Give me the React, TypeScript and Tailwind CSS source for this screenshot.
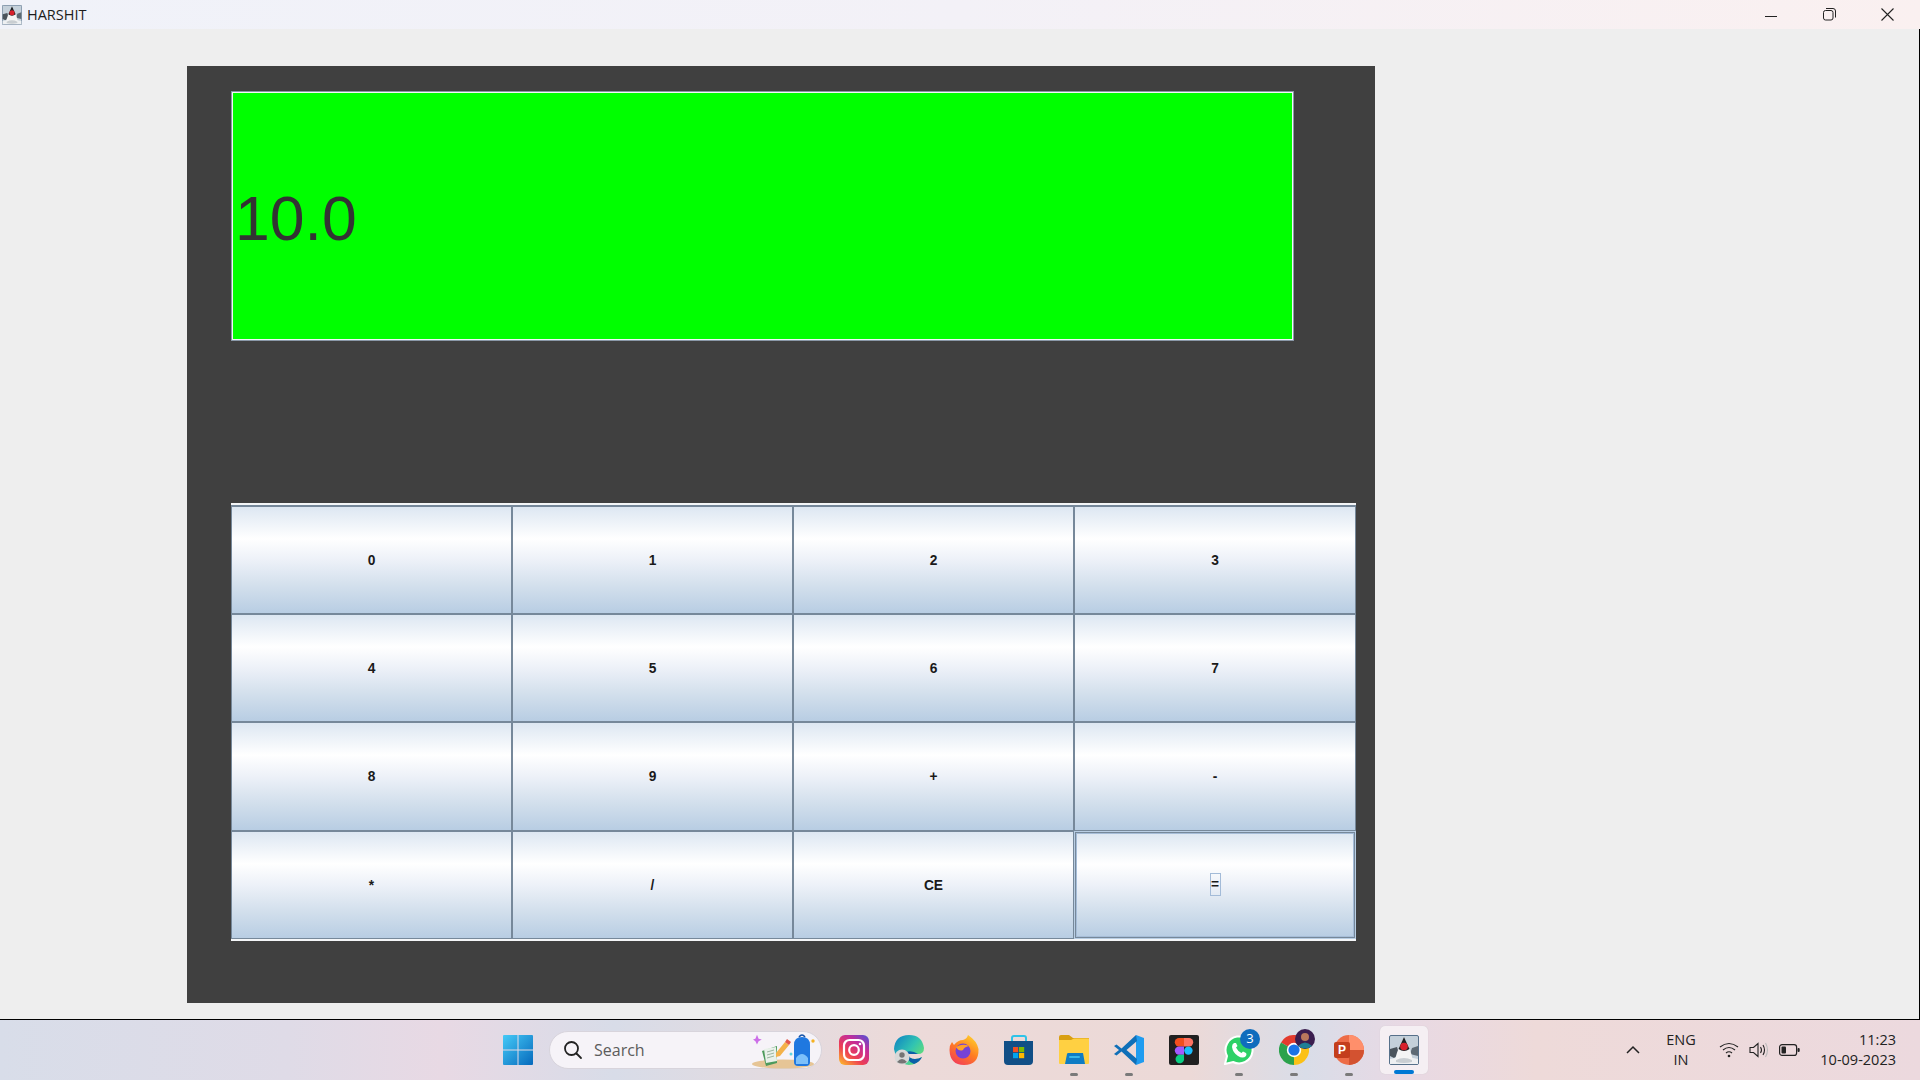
const keys = ["0", "1", "2", "3", "4", "5", "6", "7", "8", "9", "+", "-", "*", "/", "CE", "="];

const keyGradient =
  "bg-[linear-gradient(180deg,#dde7f2_0%,#ffffff_30%,#edf1f8_50%,#d2dfec_75%,#b8cde3_100%)]";

const DukeIcon = ({ size }: { size: number }) => (
  <svg width={size} height={size} viewBox="0 0 30 30">
    <rect x="0.5" y="0.5" width="29" height="29" rx="1.5" fill="#c4d0da" stroke="#56708a" />
    <path d="M1 14 L8 12 L10 19 L5 23 L1 21Z" fill="#4b545c" />
    <path d="M29 11 L23 13 L21 19 L29 21Z" fill="#5e6a74" />
    <path d="M1 24 Q15 20 29 24 V29 H1Z" fill="#eef0f2" />
    <path d="M15 2 L21 15 Q24 23 23 26 Q15 29 7 26 Q6 22 9 15Z" fill="#f4f4f4" />
    <path d="M15 2 L20.5 14 Q15 18 9.5 14Z" fill="#1d2024" />
    <circle cx="15" cy="11.5" r="3.8" fill="#d8202c" />
    <path d="M7 25 Q15 21 23 25 L23 27 Q15 29 7 27Z" fill="#c9ced2" />
  </svg>
);

const StartIcon = () => (
  <svg width="30" height="30" viewBox="0 0 30 30">
    <defs>
      <linearGradient id="win" x1="0" y1="0" x2="1" y2="1">
        <stop offset="0" stopColor="#45caf7" />
        <stop offset="1" stopColor="#0669bc" />
      </linearGradient>
    </defs>
    <path d="M1 0H14.5V14.5H0V1Q0 0 1 0Z M15.5 0H29Q30 0 30 1V14.5H15.5Z M0 15.5H14.5V30H1Q0 30 0 29Z M15.5 15.5H30V29Q30 30 29 30H15.5Z" fill="url(#win)" />
  </svg>
);

const SearchArt = () => (
  <svg width="66" height="36" viewBox="0 0 66 36">
    <ellipse cx="34" cy="31" rx="31" ry="4.5" fill="#e6c596" />
    <path d="M8 11 L10 6 L12 11 L16 12 L12 14 L10 18 L8 14 L5 12Z" fill="#cc6ee8" transform="translate(0 -3) scale(0.8)" />
    <path d="M13 18 L28 13 L28 30 L17 33Z" fill="#4d9a5c" />
    <path d="M15 16 L27 14 L28 28 L17 30Z" fill="#e9f1ea" />
    <path d="M18 19 L25 17 M18 22 L25 20 M18 25 L25 23" stroke="#9ab6a0" strokeWidth="1" />
    <path d="M27 20 L36 9 L40 12 L31 23 L27 24Z" fill="#f4b24a" />
    <path d="M36 9 L38 6 L42 9 L40 12Z" fill="#e2574c" />
    <circle cx="42" cy="21" r="1.5" fill="#5fd4e0" />
    <path d="M45 12 Q45 4 53 4 Q61 4 61 12 V29 Q61 33 57 33 H49 Q45 33 45 29Z" fill="#1f78e0" />
    <path d="M47 25 Q53 17 59 25 V31 H47Z" fill="#7cc0fa" />
    <path d="M50 4 Q53 0 56 4" fill="none" stroke="#1553a8" strokeWidth="1.5" />
    <circle cx="64" cy="8" r="1.7" fill="#f5b120" />
  </svg>
);

const InstagramIcon = () => (
  <svg width="30" height="30" viewBox="0 0 30 30">
    <defs>
      <linearGradient id="ig" x1="0.1" y1="1" x2="0.9" y2="0">
        <stop offset="0" stopColor="#fdb52c" />
        <stop offset="0.35" stopColor="#ee3f53" />
        <stop offset="0.7" stopColor="#c32c9a" />
        <stop offset="1" stopColor="#5b4fd0" />
      </linearGradient>
    </defs>
    <rect width="30" height="30" rx="6" fill="url(#ig)" />
    <rect x="5" y="5" width="20" height="20" rx="5.5" fill="none" stroke="#fff" strokeWidth="2.2" />
    <circle cx="15" cy="15" r="4.8" fill="none" stroke="#fff" strokeWidth="2.2" />
    <circle cx="21" cy="9" r="1.3" fill="#fff" />
  </svg>
);

const EdgeIcon = () => (
  <svg width="30" height="30" viewBox="0 0 30 30">
    <defs>
      <linearGradient id="edge" x1="0" y1="0" x2="1" y2="0.8">
        <stop offset="0" stopColor="#0c7fc4" />
        <stop offset="0.55" stopColor="#31c3b2" />
        <stop offset="1" stopColor="#6fe36b" />
      </linearGradient>
    </defs>
    <path d="M0 14 Q1 0 15 0 Q28 0 30 13 Q30 19 24 19 H14 Q15 24 21 24 Q25 24 28 22 Q23 30 15 30 Q3 29 0 14Z" fill="url(#edge)" />
    <path d="M20 29 Q26 27 28 22 Q25 24 21 24 Q15 24 14 19 H24 Q18 15 12 17 Q11 25 20 29Z" fill="#0b5fa8" />
    <circle cx="8" cy="22" r="7.5" fill="#d8d8d8" />
    <circle cx="8" cy="20" r="2.7" fill="#757575" />
    <path d="M3 27 Q8 21 13 27 Q8 30 3 27Z" fill="#757575" />
  </svg>
);

const FirefoxIcon = () => (
  <svg width="30" height="30" viewBox="0 0 30 30">
    <defs>
      <linearGradient id="fox" x1="0.8" y1="0" x2="0.2" y2="1">
        <stop offset="0" stopColor="#ffd02c" />
        <stop offset="0.5" stopColor="#ff7d22" />
        <stop offset="1" stopColor="#f23a5a" />
      </linearGradient>
    </defs>
    <path d="M19 0 Q28 6 29.5 14 Q30 30 15 30 Q1 30 0.5 15 Q0.5 10 3 7 L5 10 Q9 5 14 5 Q18 4 19 0Z" fill="url(#fox)" />
    <circle cx="14" cy="16" r="7.5" fill="#7542d5" />
    <path d="M7 12 Q14 8 20 11 Q15 12 14 15 Q10 17 7 12Z" fill="#ffa12b" />
  </svg>
);

const StoreIcon = () => (
  <svg width="30" height="30" viewBox="0 0 30 30">
    <path d="M8 7 V3 Q8 1 10 1 H20 Q22 1 22 3 V7" fill="none" stroke="#2ec3e8" strokeWidth="2" />
    <path d="M0 6 H29 V26 Q29 30 25 30 H4 Q0 30 0 26Z" fill="#114f86" />
    <rect x="9" y="12" width="5.2" height="5.2" fill="#f25022" />
    <rect x="15" y="12" width="5.2" height="5.2" fill="#7fba00" />
    <rect x="9" y="18" width="5.2" height="5.2" fill="#00a4ef" />
    <rect x="15" y="18" width="5.2" height="5.2" fill="#ffb900" />
  </svg>
);

const FolderIcon = () => (
  <svg width="30" height="30" viewBox="0 0 30 30">
    <path d="M0 2 Q0 0 2 0 H10 L14 3 H30 V10 H0Z" fill="#d99f12" />
    <path d="M0 5 H12 L15 3.5 H30 V28 Q30 29 29 29 H1 Q0 29 0 28Z" fill="#ffd042" />
    <path d="M6 29 L8 19 Q8 18 9.5 18 H24 L26 29Z" fill="#0f7cc4" />
    <rect x="10" y="21" width="11" height="2" rx="1" fill="#38b6ea" />
  </svg>
);

const VsCodeIcon = () => (
  <svg width="30" height="30" viewBox="0 0 30 30">
    <path d="M22 0 L30 3 V27 L22 30 Z" fill="#1f9cf0" />
    <path d="M22 0 L7.5 13.5 L2.5 9.5 L0 11 L5 15 L0 19 L2.5 20.5 L7.5 16.5 L22 30 L23 24 L12.5 15 L23 6Z" fill="#0f6fb8" />
  </svg>
);

const FigmaIcon = () => (
  <svg width="30" height="30" viewBox="0 0 30 30">
    <rect width="30" height="30" rx="2" fill="#202020" />
    <path d="M15 3 H10 A4.2 4.2 0 0 0 10 11.4 H15Z" fill="#f24e1e" />
    <path d="M15 3 H20 A4.2 4.2 0 0 1 20 11.4 H15Z" fill="#ff7262" />
    <path d="M15 11.4 H10 A4.2 4.2 0 0 0 10 19.8 H15Z" fill="#a259ff" />
    <circle cx="19.4" cy="15.6" r="4.2" fill="#1abcfe" />
    <path d="M10 19.8 H15 V23 A4.3 4.3 0 1 1 10 19.8Z" fill="#0acf83" />
  </svg>
);

const WhatsAppIcon = () => (
  <svg width="30" height="30" viewBox="0 0 30 30">
    <path d="M1 29 L3 21 A13.5 13.5 0 1 1 9 27Z" fill="#2ed167" stroke="#fff" strokeWidth="2" />
    <path d="M10 8 Q8 9 8 12 Q9 18 14 21 Q19 24 22 21 Q23 19 22 18 L19 16.5 L17.5 18 Q13.5 16 12 12.5 L13.5 11 L12 8Z" fill="#fff" />
  </svg>
);

const ChromeIcon = () => (
  <svg width="30" height="30" viewBox="0 0 30 30">
    <path d="M15 15 L2 7.5 A15 15 0 0 1 28 7.5Z" fill="#e33b2e" />
    <path d="M15 15 L28 7.5 A15 15 0 0 1 15 30Z" fill="#fbc116" />
    <path d="M15 15 L15 30 A15 15 0 0 1 2 7.5Z" fill="#2ba24c" />
    <circle cx="15" cy="15" r="7.2" fill="#fff" />
    <circle cx="15" cy="15" r="5.6" fill="#1a73e8" />
  </svg>
);

const PowerPointIcon = () => (
  <div className="relative w-[30px] h-[30px]">
    <svg width="30" height="30" viewBox="0 0 30 30">
      <circle cx="15" cy="15" r="15" fill="#ed6c47" />
      <path d="M15 0 A15 15 0 0 1 30 15 H15Z" fill="#ff8f6b" />
      <path d="M15 15 H30 A15 15 0 0 1 15 30Z" fill="#d35230" />
    </svg>
    <span className="absolute left-0 top-[7px] flex w-4 h-4 items-center justify-center bg-[#c43e1c] rounded-[2px] text-white text-[12px] font-bold font-['Liberation_Sans',sans-serif]">
      P
    </span>
  </div>
);

const TaskIcon = ({ open, children }: { open?: boolean; children: React.ReactNode }) => (
  <div className="relative flex w-[30px] h-[30px] items-center justify-center">
    {children}
    {open && <span className="absolute left-[11px] top-[38px] w-2 h-[3px] rounded-full bg-[#7a7a7a]" />}
  </div>
);

function TitleBar() {
  return (
    <div className="flex h-[29px] items-center bg-[linear-gradient(90deg,#f0f2f9_0%,#f3f1f7_50%,#faf0f0_100%)]">
      <div className="ml-[2px]">
        <DukeIcon size={20} />
      </div>
      <span className="ml-[5px] text-[14.5px] text-[#1c1c1c] font-['Open_Sans',sans-serif]">HARSHIT</span>
      <div className="ml-auto mr-[4px] flex items-center">
        <button className="flex w-[58px] h-[29px] items-center justify-center">
          <svg width="12" height="12" viewBox="0 0 12 12">
            <path d="M0 7.5H12" stroke="#222" strokeWidth="1" />
          </svg>
        </button>
        <button className="flex w-[58px] h-[29px] items-center justify-center">
          <svg width="13" height="13" viewBox="0 0 13 13" fill="none" stroke="#222">
            <rect x="0.5" y="2.5" width="9.5" height="9.5" rx="2" />
            <path d="M3 0.5 H10 Q12.5 0.5 12.5 3 V9.5" />
          </svg>
        </button>
        <button className="flex w-[58px] h-[29px] items-center justify-center">
          <svg width="13" height="13" viewBox="0 0 13 13" stroke="#222" strokeWidth="1.1">
            <path d="M0.5 0.5 L12.5 12.5 M12.5 0.5 L0.5 12.5" />
          </svg>
        </button>
      </div>
    </div>
  );
}

function CalcKey({ label, index }: { label: string; index: number }) {
  const focused = label === "=";
  if (focused) {
    return (
      <div className="bg-[#b9cee4] p-px">
        <button className={`flex w-full h-full items-center justify-center border border-[#76889a] shadow-[inset_0_0_0_1px_#a6bdd8] ${keyGradient}`}>
          <span className="flex w-[11px] h-[23px] items-center justify-center border border-[#a3bbd8] pt-[2px] text-[13.75px] font-bold text-[#1a1a1a]">
            {label}
          </span>
        </button>
      </div>
    );
  }
  return (
    <button
      className={`flex items-center justify-center border border-[#76889a] pt-[3px] text-[13.75px] font-bold text-[#1a1a1a] ${keyGradient} ${index < 4 ? "border-t-2" : ""}`}
    >
      {label}
    </button>
  );
}

function Calculator() {
  return (
    <div className="ml-[187px] mt-[37px] w-[1188px] h-[937px] bg-[#404040] pl-[44px] pt-[26px] font-['Liberation_Sans',sans-serif]">
      <div className="ml-px flex w-[1061px] h-[248px] items-center border border-[#f4f6f8] bg-[#00ff00] pl-[2px] pt-[4px] text-[62.5px] leading-none text-[#333333] outline outline-1 outline-[#8a98a8]">
        10.0
      </div>
      <div className="mt-[163px] grid w-[1125px] h-[438px] grid-cols-[281px_281px_281px_282px] grid-rows-4 border-t-2 border-b-2 border-[#f4f6f8]">
        {keys.map((k, i) => (
          <CalcKey key={k} label={k} index={i} />
        ))}
      </div>
    </div>
  );
}

function Taskbar() {
  return (
    <div className="flex h-[61px] items-center border-t border-black bg-[linear-gradient(90deg,#d8dde9_0%,#dfdbe7_15%,#e8d9e4_23%,#d8dce8_32%,#ecdad9_47%,#ecd9d7_62%,#d9dde8_68%,#e8d9e4_73%,#eedad9_80%,#ecd9de_100%)] font-['Open_Sans',sans-serif]">
      <div className="ml-[503px] flex items-center gap-[16px]">
        <StartIcon />
        <div className="relative flex w-[273px] h-[38px] items-center rounded-full bg-[#f6f3f8] border border-[#d8d4dc] pl-[13px]">
          <svg width="20" height="20" viewBox="0 0 20 20" fill="none" stroke="#222" strokeWidth="1.8">
            <circle cx="8.5" cy="8.5" r="6.5" />
            <path d="M13.5 13.5 L18 18" strokeLinecap="round" />
          </svg>
          <span className="ml-[11px] text-[16px] text-[#5c5c5c]">Search</span>
          <div className="absolute right-[6px] top-[1px]">
            <SearchArt />
          </div>
        </div>
      </div>
      <div className="ml-[17px] flex items-center gap-[25px]">
        <TaskIcon><InstagramIcon /></TaskIcon>
        <TaskIcon><EdgeIcon /></TaskIcon>
        <TaskIcon><FirefoxIcon /></TaskIcon>
        <TaskIcon><StoreIcon /></TaskIcon>
        <TaskIcon open><FolderIcon /></TaskIcon>
        <TaskIcon open><VsCodeIcon /></TaskIcon>
        <TaskIcon><FigmaIcon /></TaskIcon>
        <TaskIcon open>
          <WhatsAppIcon />
          <span className="absolute left-[16px] top-[-6px] flex w-5 h-5 items-center justify-center rounded-full bg-[#0f6cbd] text-[13px] text-white">3</span>
        </TaskIcon>
        <TaskIcon open>
          <ChromeIcon />
          <svg className="absolute left-[16px] top-[-6px]" width="20" height="20" viewBox="0 0 20 20">
            <circle cx="10" cy="10" r="10" fill="#3b1e4f" />
            <circle cx="10" cy="8" r="4" fill="#b9785c" />
            <path d="M3 17 Q10 10 17 17 Q10 22 3 17Z" fill="#1f7f95" />
          </svg>
        </TaskIcon>
        <TaskIcon open><PowerPointIcon /></TaskIcon>
      </div>
      <div className="relative ml-[16px] flex w-[48px] h-[48px] items-center justify-center rounded-[5px] bg-[#f5eff3] shadow-[0_0_1px_#c8c4c8]">
        <DukeIcon size={30} />
        <span className="absolute left-[14px] bottom-[0px] w-[20px] h-[4px] rounded-full bg-[#0078d4]" />
      </div>
      <svg className="ml-[197px]" width="16" height="10" viewBox="0 0 16 10" fill="none" stroke="#222" strokeWidth="1.5">
        <path d="M2 8 L8 2 L14 8" />
      </svg>
      <div className="ml-[25px] flex w-[30px] flex-col items-center text-[14.5px] leading-[20px] text-[#222]">
        <span>ENG</span>
        <span>IN</span>
      </div>
      <svg className="ml-[23px]" width="20" height="16" viewBox="0 0 20 16" fill="none" stroke="#222" strokeWidth="1.2">
        <path d="M1 5 Q10 -2 19 5 M4 8 Q10 3 16 8 M7 11 Q10 8.5 13 11" />
        <circle cx="10" cy="14" r="1.3" fill="#222" stroke="none" />
      </svg>
      <svg className="ml-[10px]" width="20" height="16" viewBox="0 0 20 16" fill="none" stroke="#222" strokeWidth="1.1">
        <path d="M1 5.5 H4.5 L9 1.5 V14.5 L4.5 10.5 H1Z" />
        <path d="M11.5 5 Q13.5 8 11.5 11 M14 3 Q17 8 14 13" />
        <path d="M16.5 1 Q20.5 8 16.5 15" stroke="#bbb" />
      </svg>
      <svg className="ml-[10px]" width="21" height="14" viewBox="0 0 21 14">
        <rect x="0.6" y="1.6" width="17" height="10.8" rx="2.5" fill="none" stroke="#222" strokeWidth="1.2" />
        <rect x="2.5" y="3.5" width="4.5" height="7" rx="1" fill="#222" />
        <rect x="18.5" y="5" width="2.2" height="4" rx="1" fill="#222" />
      </svg>
      <div className="ml-auto mr-[24px] flex flex-col items-end text-[14.5px] leading-[20px] text-[#222]">
        <span>11:23</span>
        <span>10-09-2023</span>
      </div>
    </div>
  );
}

export default function App() {
  return (
    <div className="flex h-screen w-full flex-col overflow-hidden bg-[#eeeeee]">
      <TitleBar />
      <div className="flex-1 border-r border-black">
        <Calculator />
      </div>
      <Taskbar />
    </div>
  );
}
